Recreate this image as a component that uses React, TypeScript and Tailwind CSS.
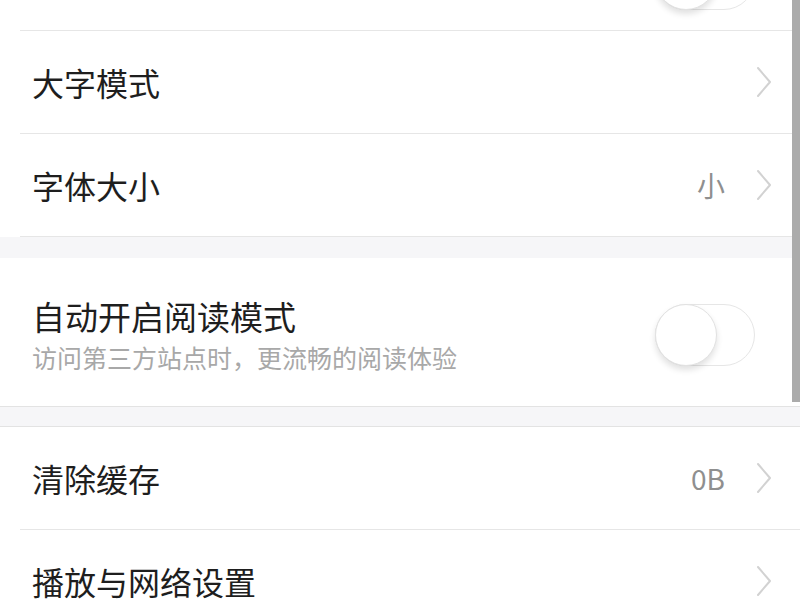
import React from 'react';

const font = { fontFamily: '"Noto Sans CJK SC", "Noto Sans", sans-serif' };

const Chevron: React.FC = () => (
  <svg width="18" height="32" viewBox="0 0 18 32" fill="none" className="shrink-0">
    <path d="M3 2 L15 16 L3 30" stroke="#d2d2d2" strokeWidth="2" strokeLinecap="round" strokeLinejoin="round" />
  </svg>
);

const Toggle: React.FC = () => (
  <div className="relative w-[100px] h-[62px] rounded-full border border-[#e6e6e6] bg-white">
    <div className="absolute left-0 top-0 w-[62px] h-[62px] -m-px rounded-full bg-white border border-[#e2e2e2] shadow-[0_4px_6px_rgba(0,0,0,0.12)]" />
  </div>
);

const Row: React.FC<{ label: string; value?: string; toggle?: boolean; divider?: boolean }> = ({
  label,
  value,
  toggle,
  divider = true,
}) => (
  <div className="relative">
    <div className="h-[102px] flex items-center justify-between pl-8 pr-[27px]">
      <span className="text-[32px] text-[#1e1e1e] leading-none">{label}</span>
      {toggle ? (
        <div className="mr-[18px]">
          <Toggle />
        </div>
      ) : (
        <div className="flex items-center gap-[30px]">
          {value && <span className="text-[28px] text-[#8f8f8f] leading-none">{value}</span>}
          <Chevron />
        </div>
      )}
    </div>
    {divider && <div className="h-px bg-[#e6e6e6] ml-5" />}
  </div>
);

export default function App() {
  return (
    <div className="relative w-[800px] h-[600px] overflow-hidden bg-[#f6f6f8]" style={font}>
      <div className="-mt-[72px]">
        {/* first group */}
        <div className="bg-white">
          <Row label="夜间模式" toggle />
          <Row label="大字模式" />
          <Row label="字体大小" value="小" />
        </div>

        <div className="h-[21px] bg-[#f6f6f8]" />

        {/* reading mode */}
        <div className="bg-white h-[149px] flex items-center justify-between pl-8 pr-[45px] border-b border-[#e3e3e3]">
          <div className="flex flex-col gap-[5px] pt-[4px]">
            <span className="text-[33px] text-[#1e1e1e] leading-[40px]">自动开启阅读模式</span>
            <span className="text-[25px] text-[#a8a8a8] leading-[32px]">访问第三方站点时，更流畅的阅读体验</span>
          </div>
          <div className="pt-[6px]">
            <Toggle />
          </div>
        </div>

        <div className="h-[20px] bg-[#f6f6f8] border-b border-[#e3e3e3]" />

        {/* cache group */}
        <div className="bg-white">
          <Row label="清除缓存" value="0B" />
          <Row label="播放与网络设置" divider={false} />
        </div>
      </div>

      {/* scrollbar */}
      <div className="absolute right-0 top-0 w-[8px] h-[402px] bg-[#ababab]" />
    </div>
  );
}
